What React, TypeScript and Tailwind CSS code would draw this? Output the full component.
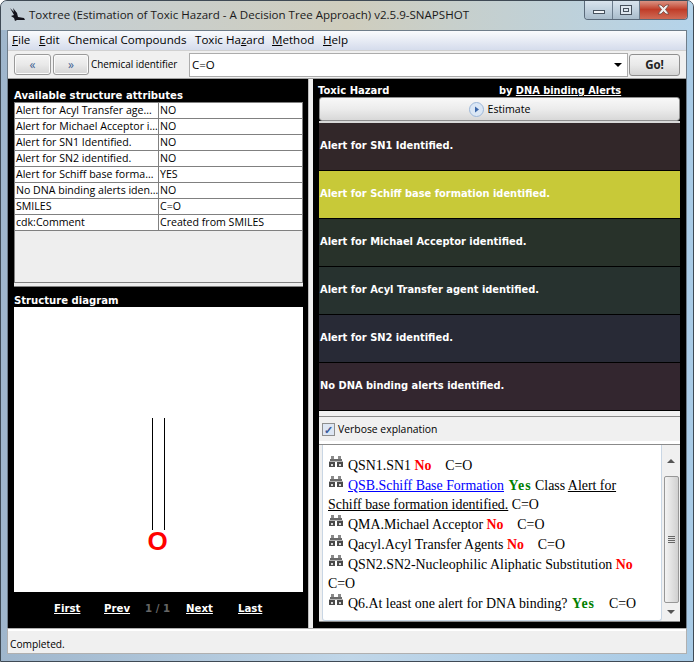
import React from 'react';

const attributes = [
  ['Alert for Acyl Transfer age…', 'NO'],
  ['Alert for Michael Acceptor i…', 'NO'],
  ['Alert for SN1 Identified.', 'NO'],
  ['Alert for SN2 identified.', 'NO'],
  ['Alert for Schiff base forma…', 'YES'],
  ['No DNA binding alerts iden…', 'NO'],
  ['SMILES', 'C=O'],
  ['cdk:Comment', 'Created from SMILES'],
];

const hazards = [
  { label: 'Alert for SN1 Identified.', color: 'bg-[#322729]' },
  { label: 'Alert for Schiff base formation identified.', color: 'bg-[#c8c938]' },
  { label: 'Alert for Michael Acceptor identified.', color: 'bg-[#28322a]' },
  { label: 'Alert for Acyl Transfer agent identified.', color: 'bg-[#27322f]' },
  { label: 'Alert for SN2 identified.', color: 'bg-[#282a36]' },
  { label: 'No DNA binding alerts identified.', color: 'bg-[#33262f]' },
];

const BinocularIcon = () => (
  <svg width="14" height="12" viewBox="0 0 14 12" className="inline-block ml-[1px] mr-[5px] align-[2px]">
    <rect x="2" y="0" width="3" height="3" fill="#8a8a8a" />
    <rect x="9" y="0" width="3" height="3" fill="#8a8a8a" />
    <rect x="1" y="3" width="12" height="2" fill="#6a6a6a" />
    <rect x="0" y="5" width="14" height="1" fill="#b5b5b5" />
    <rect x="0" y="6" width="6" height="5" fill="#4a4a4a" />
    <rect x="8" y="6" width="6" height="5" fill="#4a4a4a" />
    <rect x="2" y="8" width="2" height="2" fill="#d8d8d8" />
    <rect x="10" y="8" width="2" height="2" fill="#d8d8d8" />
  </svg>
);

const No = () => <b className="text-[#ff0000]">No</b>;
const Yes = () => <b className="text-[#008000] tracking-[1px] ml-px">Yes</b>;

const NavButton = ({ children, w }: { children: React.ReactNode; w: string }) => (
  <button className={`${w} h-[21px] border border-[#9a9a9a] rounded-[3px] bg-gradient-to-b from-[#f4f4f4] via-[#e9e9e9] to-[#d4d4d4] text-[#3f5f92] text-[12px] leading-[17px] shadow-[inset_0_0_0_1px_#fbfbfb]`}>
    {children}
  </button>
);

export default function App() {
  return (
    <div className="relative w-[694px] h-[662px] overflow-hidden rounded-t-[7px] bg-gradient-to-r from-[#9fb6cc] via-[#c0d6e8] to-[#a9cbe6] font-['Open_Sans',sans-serif] text-[12px] text-black flex flex-col border border-[#3f4a55]">
      {/* title bar */}
      <div className="h-[29px] shrink-0 flex items-center pl-[8px] pb-[2px] bg-gradient-to-r from-[#c3cfd8] via-[#cfcdbd] to-[#b4d3ea] relative">
        <svg width="17" height="15" viewBox="0 0 17 15" className="mr-[3px]">
          <path d="M1 1 L5 5 L4 1 L8 6 L9 10 L15 11 L16 13 L8 13 L6 14 L5 11 L2 9 L5 8 Z" fill="#14141c" />
        </svg>
        <span className="text-[11.55px] text-[#1a1a1a] whitespace-nowrap">
          Toxtree (Estimation of Toxic Hazard - A Decision Tree Approach) v2.5.9-SNAPSHOT
        </span>
        <div className="absolute right-[5px] -top-px flex h-[20px] border border-t-0 border-[#5a6a7a] rounded-b-[4px] overflow-hidden">
          <div className="w-[28px] bg-gradient-to-b from-[#dbe6ef] via-[#c2d2df] to-[#a9bccb] border-r border-[#6b7c8c] flex items-center justify-center">
            <div className="w-[12px] h-[4px] mt-[5px] bg-[#f2f5f8] border border-[#47525e]" />
          </div>
          <div className="w-[27px] bg-gradient-to-b from-[#dbe6ef] via-[#c2d2df] to-[#a9bccb] border-r border-[#6b7c8c] flex items-center justify-center">
            <div className="w-[12px] h-[10px] border border-[#47525e] bg-[#dfe8f0] flex items-center justify-center">
              <div className="w-[6px] h-[4px] border border-[#47525e]" />
            </div>
          </div>
          <div className="w-[47px] bg-gradient-to-b from-[#dc9c8e] via-[#c03c28] to-[#cf6a55] flex items-center justify-center">
            <svg width="13" height="11" viewBox="0 0 13 11">
              <path d="M1 1 H4 L6.5 3.5 L9 1 H12 L8.5 5.5 L12 10 H9 L6.5 7.5 L4 10 H1 L4.5 5.5 Z" fill="#f1f1f1" stroke="#6e4a44" strokeWidth="0.8" />
            </svg>
          </div>
        </div>
      </div>

      {/* client */}
      <div className="mx-[6px] flex-1 flex flex-col border border-[#6f7d8a] bg-[#f0f0f0] min-h-0">
        {/* menu */}
        <div className="h-[19px] shrink-0 flex items-center pl-[4px] pb-[2px] bg-gradient-to-b from-[#fafbfd] to-[#d5dcec] text-[11.6px] whitespace-nowrap">
          <span className="w-[27px]"><u>F</u>ile</span>
          <span className="w-[29px]"><u>E</u>dit</span>
          <span className="w-[127px]">Chemical Compounds</span>
          <span className="w-[77px]">Toxic Ha<u>z</u>ard</span>
          <span className="w-[51px]"><u>M</u>ethod</span>
          <span><u>H</u>elp</span>
        </div>

        {/* toolbar */}
        <div className="h-[28px] shrink-0 flex items-center pl-[6px] pr-[6px] bg-[#f0f0f0] border-t border-[#d0d0d0]">
          <NavButton w="w-[37px]">«</NavButton>
          <div className="w-[2px]" />
          <NavButton w="w-[36px]">»</NavButton>
          <span className="ml-[2px] w-[98px] text-[9.9px] whitespace-nowrap">Chemical identifier</span>
          <div className="flex-1 h-[24px] bg-white border border-[#acacac] flex items-center justify-between pl-[2px] pr-[5px] text-[11.5px]">
            <span>C=O</span>
            <div className="w-0 h-0 border-x-[4px] border-x-transparent border-t-[4px] border-t-black" />
          </div>
          <button className="ml-[1px] w-[51px] h-[22px] border border-[#8f8f8f] rounded-[3px] bg-gradient-to-b from-[#f4f4f4] via-[#e9e9e9] to-[#d4d4d4] font-bold text-[11.5px] text-[#222]">
            Go!
          </button>
        </div>

        {/* panels */}
        <div className="flex-1 flex min-h-0 border-t border-[#a0a0a0]">
          {/* left */}
          <div className="w-[300px] shrink-0 bg-black flex flex-col pl-[6px] pr-[5px] pt-[9px] font-['DejaVu_Sans',sans-serif]">
            <div className="text-white font-bold text-[10.1px] leading-[16px] h-[14px] whitespace-nowrap">Available structure attributes</div>
            <div className="h-[181px] bg-[#eeeeee] border border-[#808080]">
              {attributes.map(([k, v]) => (
                <div key={k} className="flex h-[16px] bg-white border-b border-[#808080] text-[10.6px] leading-[14px] font-['Open_Sans',sans-serif]">
                  <div className="w-[144px] pl-[1px] border-r border-[#808080] whitespace-nowrap overflow-hidden">{k}</div>
                  <div className="flex-1 pl-[1px] whitespace-nowrap">{v}</div>
                </div>
              ))}
            </div>
            <div className="h-[4px] bg-[#eeeeee] border-b border-[#808080]" />
            <div className="text-white font-bold text-[10.1px] leading-[16px] mt-[6px] h-[14px] whitespace-nowrap">Structure diagram</div>
            <div className="h-[285px] bg-white">
              <svg viewBox="0 0 289 285" width="289" height="285">
                <line x1="138.5" y1="111" x2="138.5" y2="223" stroke="black" strokeWidth="1" />
                <line x1="150.5" y1="111" x2="150.5" y2="223" stroke="black" strokeWidth="1" />
                <text x="143.5" y="243" textAnchor="middle" fontFamily="Liberation Sans" fontWeight="bold" fontSize="26" fill="#ff0000">O</text>
              </svg>
            </div>
            <div className="flex items-center h-[33px] pl-[40px] text-[10.2px] font-bold text-white whitespace-nowrap">
              <u className="w-[50px]">First</u>
              <u className="w-[41px]">Prev</u>
              <span className="w-[41px] text-[#666666]">1 / 1</span>
              <u className="w-[52px]">Next</u>
              <u>Last</u>
            </div>
          </div>

          {/* splitter */}
          <div className="w-[5px] shrink-0 bg-[#f0f0f0] border-l border-[#bdbdbd]" />

          {/* right */}
          <div className="flex-1 min-w-0 bg-black flex flex-col pl-[6px] pr-[6px] pt-[4px] font-['DejaVu_Sans',sans-serif]">
            <div className="flex h-[13px] -ml-px text-white font-bold text-[10px] leading-[15px] whitespace-nowrap">
              <span className="w-[181px]">Toxic Hazard</span>
              <span className="text-[9.8px]">by <u>DNA binding Alerts</u></span>
            </div>
            <div className="h-[24px] mt-[1px] pt-[1px] border border-[#8f8f8f] rounded-[3px] bg-gradient-to-b from-[#f8f8f8] via-[#ececec] to-[#d8d8d8] flex items-center justify-center font-['Open_Sans',sans-serif] text-[10.6px] text-black">
              <svg width="15" height="15" viewBox="0 0 15 15" className="mr-[4px]">
                <circle cx="7.5" cy="7.5" r="7" fill="#dbe7f5" stroke="#9db7d8" />
                <path d="M6 4.5 L10 7.5 L6 10.5 Z" fill="#3b66a8" />
              </svg>
              Estimate
            </div>
            <div className="h-[2px] bg-[#d8d8d8]" />
            {hazards.map((h) => (
              <div
                key={h.label}
                className={`${h.color} h-[48px] shrink-0 border-b border-black flex items-center pl-[1px] pb-[1px] text-white font-bold text-[9.9px]`}
              >
                {h.label}
              </div>
            ))}
            <div className="h-[6px] shrink-0 bg-[#f0f0f0] border-b border-[#8a8a8a]" />
            <div className="h-[24px] shrink-0 pt-[1px] bg-[#f0f0f0] flex items-center pl-[3px] font-['Open_Sans',sans-serif] text-[10.4px]">
              <span className="w-[13px] h-[13px] mr-[3px] border border-[#8e8f8f] bg-[#dde6f3] text-[#3a5a9a] text-[11px] leading-[11px] text-center font-bold">✓</span>
              Verbose explanation
            </div>
            <div className="h-[4px] shrink-0 bg-white border-b border-[#8a8a8a]" />
            <div className="flex h-[177px] shrink-0 bg-[#f0f0f0] border-b border-[#8a8a8a] pl-[3px]">
              <div className="flex-1 bg-white border border-t-0 border-[#c9d6e4] rounded-b-[3px] pl-[5px] pr-[16px] pt-[11px] font-['Liberation_Serif',serif] text-[13.9px] leading-[19.7px]">
                <div><BinocularIcon />QSN1.SN1 <No /> &nbsp;&nbsp; C=O</div>
                <div><BinocularIcon /><u className="text-[#0000ff]">QSB.Schiff Base Formation</u> <Yes /> Class <u>Alert for Schiff base formation identified.</u> C=O</div>
                <div><BinocularIcon />QMA.Michael Acceptor <No /> &nbsp;&nbsp; C=O</div>
                <div><BinocularIcon />Qacyl.Acyl Transfer Agents <No /> &nbsp;&nbsp; C=O</div>
                <div><BinocularIcon />QSN2.SN2-Nucleophilic Aliphatic Substitution <No /> C=O</div>
                <div><BinocularIcon />Q6.At least one alert for DNA binding? <Yes /> &nbsp;&nbsp; C=O</div>
              </div>
              <div className="w-[18px] shrink-0 flex flex-col items-center">
                <div className="h-[31px] flex items-center">
                  <div className="w-0 h-0 border-x-[4px] border-x-transparent border-b-[4px] border-b-[#555]" />
                </div>
                <div className="w-[15px] h-[127px] border border-[#979797] rounded-[2px] bg-gradient-to-r from-[#f3f3f3] to-[#d0d0d0] flex flex-col items-center justify-center gap-[1px]">
                  <div className="w-[7px] h-px bg-[#666]" />
                  <div className="w-[7px] h-px bg-[#666]" />
                  <div className="w-[7px] h-px bg-[#666]" />
                  <div className="w-[7px] h-px bg-[#666]" />
                </div>
                <div className="flex-1 flex items-center">
                  <div className="w-0 h-0 border-x-[4px] border-x-transparent border-t-[4px] border-t-[#555]" />
                </div>
              </div>
            </div>
            <div className="flex-1" />
          </div>
        </div>

        {/* status */}
        <div className="h-[24px] shrink-0 bg-[#f0f0f0] border-t-2 border-white outline outline-1 outline-[#b0b0b0] flex items-end pl-[2px] pb-[1px] text-[10.2px] leading-[16px]">
          Completed.
        </div>
      </div>
      <div className="h-[7px] shrink-0" />
    </div>
  );
}
